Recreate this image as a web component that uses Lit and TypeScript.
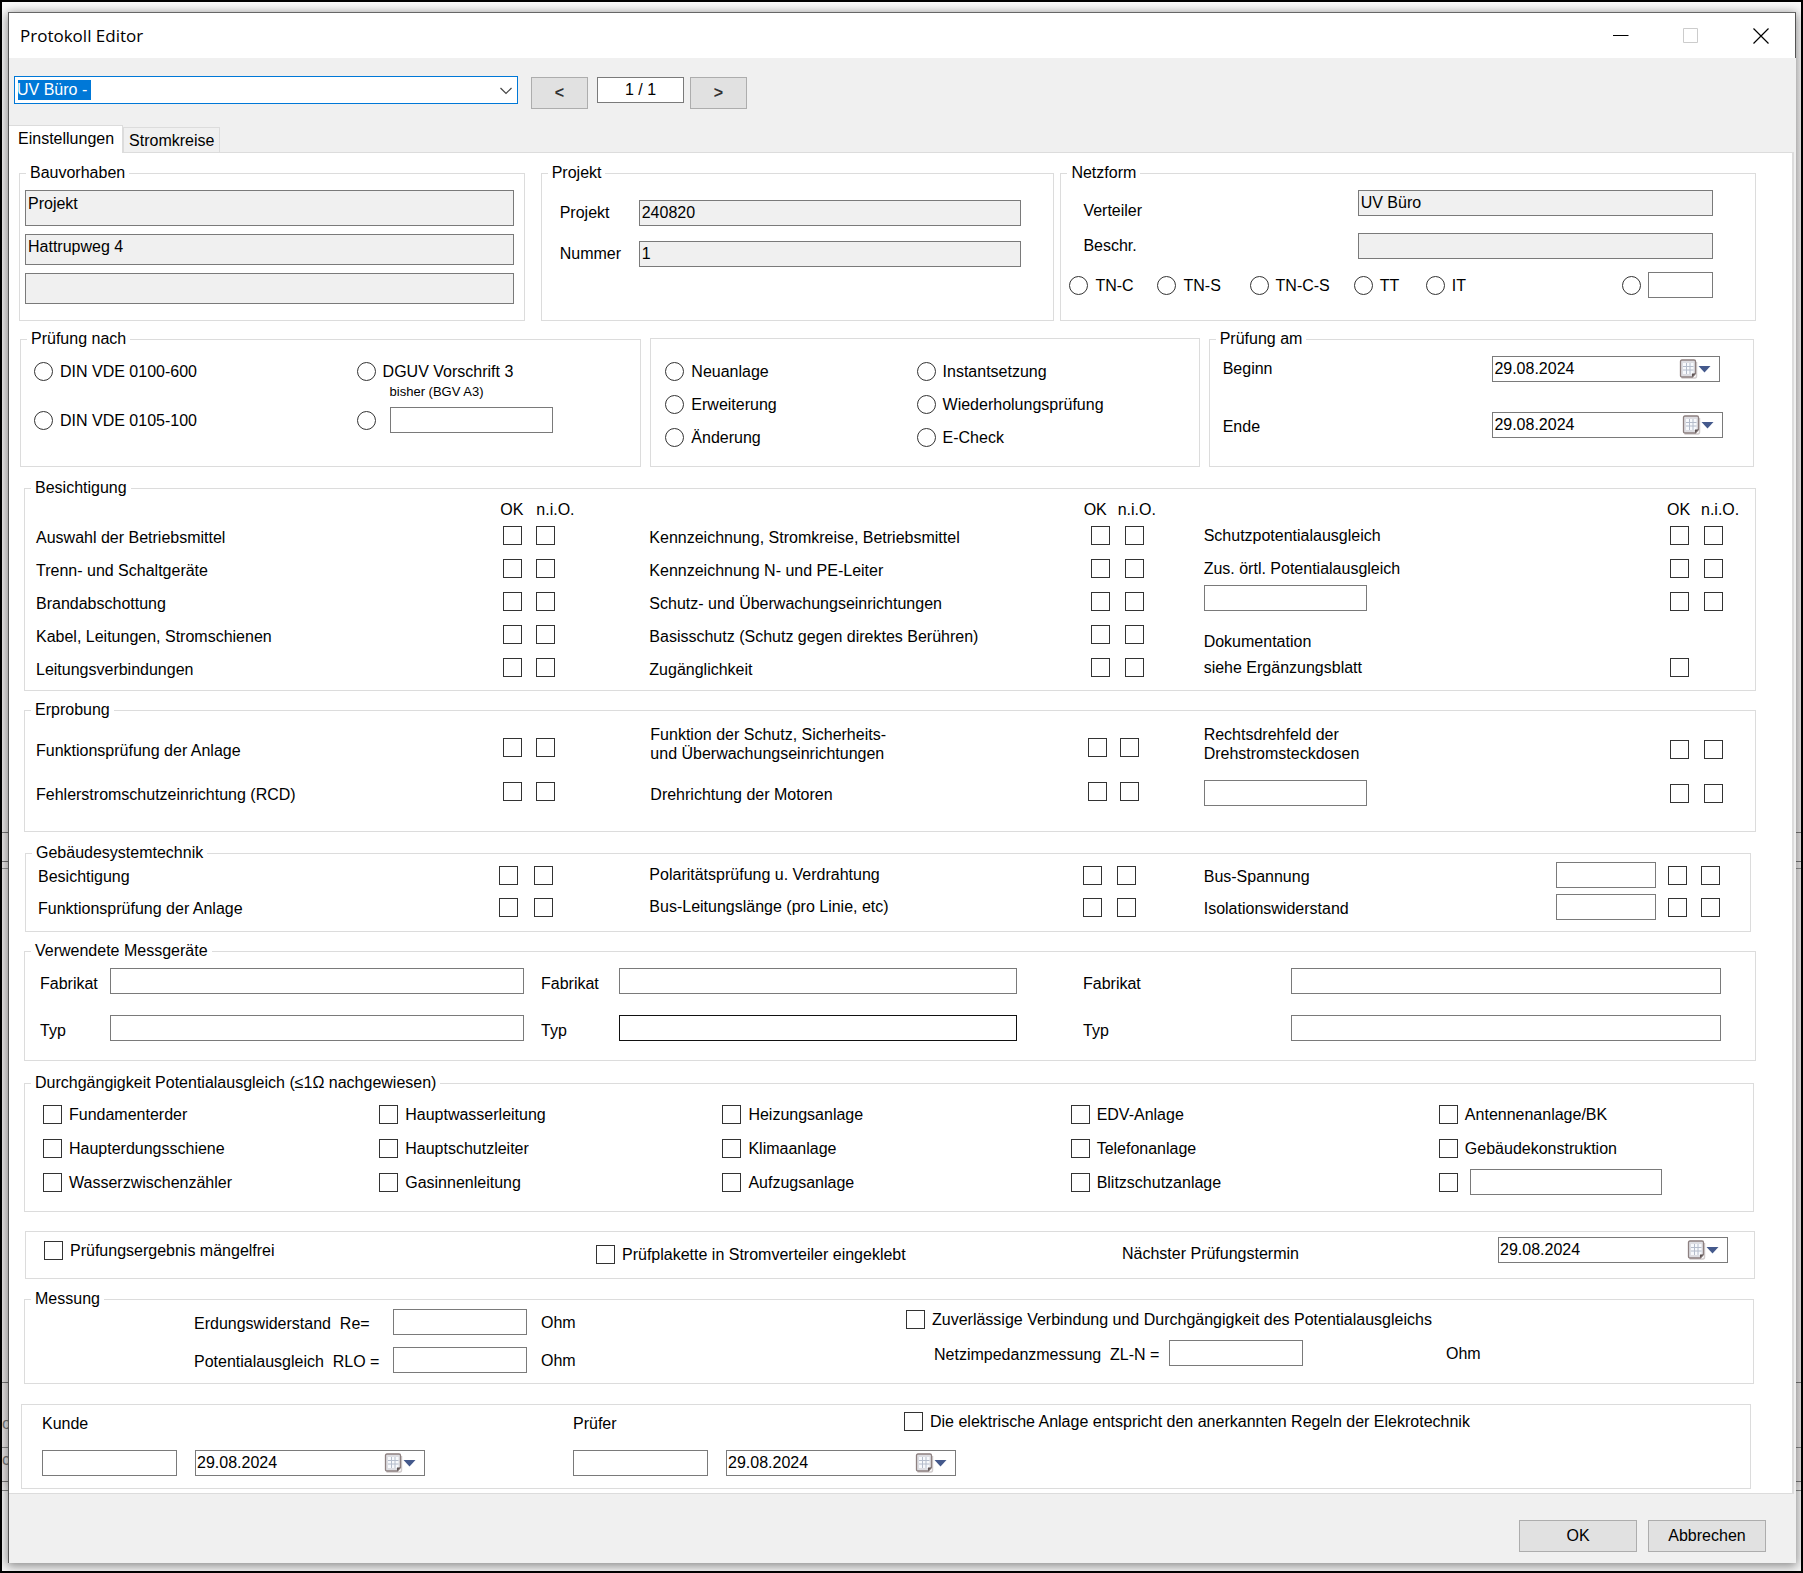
import { LitElement, html, css, nothing, TemplateResult } from "lit";
import { customElement, state } from "lit/decorators.js";

type Cell = TemplateResult | typeof nothing;

const BESICHTIGUNG_LEFT = [
  "Auswahl der Betriebsmittel",
  "Trenn- und Schaltgeräte",
  "Brandabschottung",
  "Kabel, Leitungen, Stromschienen",
  "Leitungsverbindungen",
];

const BESICHTIGUNG_MIDDLE = [
  "Kennzeichnung, Stromkreise, Betriebsmittel",
  "Kennzeichnung N- und PE-Leiter",
  "Schutz- und Überwachungseinrichtungen",
  "Basisschutz (Schutz gegen direktes Berühren)",
  "Zugänglichkeit",
];

const POTENTIAL_ROWS = [
  ["Fundamenterder", "Hauptwasserleitung", "Heizungsanlage", "EDV-Anlage", "Antennenanlage/BK"],
  ["Haupterdungsschiene", "Hauptschutzleiter", "Klimaanlage", "Telefonanlage", "Gebäudekonstruktion"],
  ["Wasserzwischenzähler", "Gasinnenleitung", "Aufzugsanlage", "Blitzschutzanlage"],
];

@customElement("app-root")
export class AppRoot extends LitElement {
  @state() private tab = "Einstellungen";

  static styles = css`
    :host {
      display: block;
      font-family: "Liberation Sans", Arial, sans-serif;
      font-size: 16px;
      line-height: 18px;
      color: #000;
    }
    * { box-sizing: border-box; }
    .desktop {
      position: relative;
      min-height: 100vh;
      border: 2px solid #000;
      padding: 10px 5px 8px 6px;
      overflow: hidden;
      background:
        linear-gradient(#777, #777) 0 830px / 100% 1px no-repeat,
        linear-gradient(#777, #777) 0 859px / 100% 1px no-repeat,
        linear-gradient(#999, #999) 0 866px / 100% 1px no-repeat,
        linear-gradient(#777, #777) 0 1380px / 100% 1px no-repeat,
        linear-gradient(#888, #888) 0 1445px / 100% 1px no-repeat,
        linear-gradient(#777, #777) 0 1479px / 100% 1px no-repeat,
        linear-gradient(#888, #888) 0 1488px / 100% 1px no-repeat,
        linear-gradient(#fafafa 0, #f0eeee 200px, #e9e6e6 1480px, #f6f6f6 1490px);
    }
    .behind {
      position: absolute;
      left: 0;
      top: 1413px;
      display: grid;
      gap: 18px;
      color: #777;
    }
    .window {
      position: relative;
      display: flex;
      flex-direction: column;
      background: #f0f0f0;
      border-left: 1px solid #555;
      border-top: 1px solid #666;
      box-shadow: 0 2px 10px 1px rgba(0, 0, 0, 0.45);
    }
    .titlebar {
      display: flex;
      align-items: center;
      justify-content: space-between;
      height: 45px;
      padding-left: 11px;
      padding-right: 18px;
      background: #fff;
      border-right: 1px solid #555;
    }
    h1 {
      margin: 0;
      font: 400 17px/24px "Open Sans", "Noto Sans", sans-serif;
    }
    .controls { display: flex; gap: 38px; }
    .controls button {
      display: grid;
      place-items: center;
      width: 32px;
      height: 32px;
      padding: 0;
      border: 0;
      background: none;
    }
    .toolbar {
      display: flex;
      align-items: flex-start;
      padding: 18px 5px 0;
    }
    .combo {
      position: relative;
      flex: 0 1 504px;
      display: flex;
      margin-right: 13px;
    }
    .combo select {
      appearance: none;
      width: 100%;
      height: 28px;
      padding: 0 24px 0 2px;
      border: 1px solid #0078d7;
      border-radius: 0;
      outline: 0;
      font: inherit;
      color: #fff;
      background: linear-gradient(#0078d7, #0078d7) 3px 3px / 73px 20px no-repeat #fff;
    }
    .combo svg { position: absolute; right: 6px; top: 11px; pointer-events: none; }
    button { font: inherit; color: #000; }
    .push {
      height: 32px;
      padding: 0;
      border: 1px solid #adadad;
      background: #e1e1e1;
    }
    .nav { flex: none; width: 57px; margin-top: 1px; font-weight: 700; color: #333; }
    .tabs { display: flex; align-items: flex-end; margin-top: 16px; }
    .tabs button {
      height: 25px;
      padding: 2px 5px 0;
      border: 1px solid #dcdcdc;
      border-bottom: 0;
      background: #f0f0f0;
    }
    .tabs button[aria-selected="true"] {
      height: 28px;
      padding: 0 8px 2px 9px;
      margin-bottom: -1px;
      background: #fff;
      border-left: 0;
      position: relative;
    }
    .panel {
      margin-right: 2px;
      padding: 11px 36px 4px 15px;
      border: solid #dcdcdc;
      border-width: 1px 2px 1px 0;
      background: #fff;
    }
    fieldset {
      min-width: 0;
      margin: 0;
      padding: 0;
      border: 1px solid #dcdcdc;
    }
    legend { margin-left: 6px; padding: 0 4px; height: 18px; }
    .plain { margin-top: 8px; }

    input[type="text"] {
      width: 100%;
      min-width: 0;
      height: 26px;
      padding: 0 2px;
      border: 1px solid #7a7a7a;
      border-radius: 0;
      outline: 0;
      font: inherit;
      color: #000;
      background: #fff;
    }
    input[type="text"][readonly] { background: #f0f0f0; }
    input[type="text"].page {
      flex: none;
      width: 87px;
      margin: 1px 6px 0 9px;
      background: #fff;
      text-align: center;
    }
    input[type="text"].active { border-color: #111; }
    input[type="checkbox"], input[type="radio"] {
      appearance: none;
      flex: none;
      display: block;
      width: 19px;
      height: 19px;
      margin: 0;
      border: 1px solid #333;
      background: #fff;
    }
    input[type="radio"] { border-radius: 50%; }
    input[type="checkbox"]:checked, input[type="radio"]:checked {
      background: radial-gradient(#222 0 4px, #fff 5px);
    }
    .opt {
      display: flex;
      align-items: center;
      gap: 7px;
      white-space: nowrap;
    }
    .opt span, .unit { padding-top: 1px; }
    .label { padding-top: 4px; white-space: nowrap; }
    .low { padding-top: 8px; white-space: nowrap; }

    .date {
      display: flex;
      height: 26px;
      border: 1px solid #7a7a7a;
      background: #fff;
    }
    .date input[type="text"] { height: 24px; padding: 0 1px; border: 0; }
    .date button {
      flex: none;
      width: 42px;
      padding: 0;
      border: 0;
      background: none;
    }
    .date svg { display: block; }

    .row-a {
      display: grid;
      grid-template-columns: 516fr 514fr 696fr;
      gap: 6px;
      margin-left: -5px;
    }
    .row-a > :first-child { margin-right: 10px; }
    .row-b {
      display: grid;
      grid-template-columns: 621fr 549fr 545fr;
      gap: 9px;
      margin: 9px 2px 0 -4px;
    }

    .site { display: grid; gap: 8px; padding: 8px 10px 16px 5px; }
    .site input[type="text"] { height: 31px; padding: 0 2px 5px; }
    .site input[type="text"]:first-child { height: 36px; padding-bottom: 8px; }
    .project {
      display: grid;
      grid-template-columns: 79px 1fr;
      align-items: center;
      row-gap: 15px;
      padding: 18px 32px 0 18px;
    }
    .net { display: grid; grid-template-columns: 274fr 355fr; padding: 8px 42px 0 22px; }
    .net-labels { display: grid; gap: 17px; padding-top: 12px; align-content: start; }
    .net-inputs { display: grid; gap: 17px; }
    .net-types {
      display: grid;
      grid-template-columns: 88fr 92fr 104fr 72fr 196fr 91fr;
      padding: 13px 42px 0 8px;
      height: 39px;
    }
    .norms {
      display: grid;
      grid-template-columns: 323fr 197fr;
      grid-template-rows: 19px 22px 26px;
      row-gap: 2px;
      align-items: center;
      padding: 14px 87px 33px 13px;
    }
    .note { align-self: start; padding-left: 33px; font-size: 13px; line-height: 17px; }
    .norms .opt:last-child { gap: 14px; }
    .kinds {
      display: grid;
      grid-template-columns: 252fr 283fr;
      row-gap: 14px;
      padding: 23px 0 0 14px;
    }
    .period {
      display: grid;
      grid-template-columns: 269fr 230fr;
      row-gap: 30px;
      align-items: center;
      padding: 8px 30px 0 13px;
    }
    .period .short { margin-right: 3px; }

    .matrix { display: grid; align-items: center; }
    .matrix .field { width: 163px; }
    .head { white-space: nowrap; }
    .head.ok { margin-left: -3px; }
    .head.near { margin-left: -7px; }
    .matrix .shift { margin-top: 4px; }
    .inspect { margin-top: 12px; }
    .inspect .matrix {
      grid-template-columns: 467fr 33px 113px 441fr 34px 79px 466fr 34px 40px;
      grid-template-rows: 19px repeat(5, 33px);
      padding: 3px 11px 6px;
    }
    .start { align-self: start; }
    .end { align-self: end; }
    .trial { margin-top: 10px; }
    .trial .matrix {
      grid-template-columns: 467fr 33px 114px 437fr 32px 84px 466fr 34px 40px;
      grid-template-rows: 44px 44px;
      padding: 6px 11px 18px;
    }
    .two { align-self: start; line-height: 19px; white-space: nowrap; }
    .bus { margin: 12px 5px 0 1px; }
    .bus .matrix {
      grid-template-columns: 461fr 35px 115px 433fr 34px 87px 352fr 112px 33px 38px;
      grid-template-rows: 26px 26px;
      row-gap: 6px;
      padding: 0 11px 11px 12px;
    }
    .bus .matrix .field { width: 100px; }
    .meters { margin-top: 10px; }
    .meters .body {
      display: grid;
      grid-template-columns: 70px 414fr 17px 78px 398fr 66px 208px 430fr;
      row-gap: 21px;
      align-items: center;
      padding: 8px 34px 19px 15px;
    }
    .meters .label { padding-top: 6px; }
    .meters .gap-cell { height: 1px; }
    .bond { margin: 13px 2px 0 0; }
    .bond .body {
      display: grid;
      grid-template-columns: 336fr 343fr 348fr 368fr 223fr;
      grid-auto-rows: 34px;
      align-items: center;
      padding: 5px 91px 12px 18px;
    }
    .bond .free { gap: 12px; }
    .result { margin: 19px 1px 0 1px; }
    .result .body {
      display: grid;
      grid-template-columns: 552fr 526fr 376fr 230fr;
      grid-template-rows: 26px;
      align-items: center;
      padding: 5px 26px 15px 18px;
    }
    .measure { margin: 11px 2px 0 0; }
    .measure .body { display: grid; grid-template-columns: 881fr 847fr; }
    .left {
      display: grid;
      grid-template-columns: 199px 134px auto;
      row-gap: 12px;
      align-items: center;
      padding: 1px 0 10px 169px;
    }
    .right { display: flex; flex-direction: column; gap: 11px; padding-top: 2px; }
    .impedance {
      display: grid;
      grid-template-columns: 235px 134px auto;
      align-items: center;
      padding-left: 28px;
    }
    .left .unit { padding-left: 14px; }
    .impedance .unit { padding-left: 143px; }
    .pre { white-space: pre; padding-top: 3px; }
    .sign { margin: 20px 5px 0 -3px; }
    .sign-top {
      display: grid;
      grid-template-columns: 531fr 331fr 846fr;
      height: 19px;
      margin: 4px 0 22px 20px;
    }
    .sign-bottom { display: grid; grid-template-columns: 531fr 1177fr; margin: 0 0 12px 20px; }
    .signature { display: grid; grid-template-columns: 135px 230px; gap: 18px; }
    .sign-top .label { padding-top: 6px; }

    .footer {
      display: flex;
      justify-content: flex-end;
      gap: 11px;
      padding: 26px 30px 11px;
    }
    .footer .push { width: 118px; }
  `;

  private box(name: string, cls = ""): TemplateResult {
    return html`<input class=${cls} type="checkbox" aria-label=${name} />`;
  }

  private pair(name: string, cls = ""): TemplateResult {
    return html`${this.box(`${name}: OK`, cls)}${this.box(`${name}: n.i.O.`, cls)}`;
  }

  private radio(group: string, text: string): TemplateResult {
    return html`<label class="opt"><input type="radio" name=${group} /><span>${text}</span></label>`;
  }

  private check(text: string): TemplateResult {
    return html`<label class="opt"><input type="checkbox" /><span>${text}</span></label>`;
  }

  private date(name: string, cls = ""): TemplateResult {
    return html`<div class="date ${cls}">
      <input type="text" .value=${"29.08.2024"} aria-label=${name} />
      <button type="button" aria-label="${name}: Kalender öffnen">
        <svg width="38" height="24" viewBox="0 0 38 24">
          <path d="M4.500 21h13.500q1.500 0 1.500-2v-14" fill="none" stroke="#d2cdcd" stroke-width="1.500" />
          <path d="M3.500 4.500q0-1.500 1.500-1.500h12q1.500 0 1.500 1.500v12l-3 3.500h-10.500q-1.500 0-1.500-1.500z" fill="#dddde2" stroke="#8d8080" stroke-width="1.300" />
          <path d="M6 6h10.500v11h-10.500z" fill="#f7f9fc" />
          <path d="M6 9.500h10.500M6 13h10.500M9.500 6v11M13 6v11" stroke="#b4bccb" fill="none" />
          <path d="M15 20v-3.500h3.500z" fill="#5f5555" />
          <path d="M21.500 9h12l-6 6.500z" fill="#44598c" />
        </svg>
      </button>
    </div>`;
  }

  private thirdColumn(row: number): Cell {
    switch (row) {
      case 0:
        return html`<span>Schutzpotentialausgleich</span>${this.pair("Schutzpotentialausgleich")}`;
      case 1:
        return html`<span>Zus. örtl. Potentialausgleich</span>${this.pair("Zus. örtl. Potentialausgleich")}`;
      case 2:
        return html`<input class="field start" type="text" aria-label="Weitere Besichtigung" />${this.pair("Weitere Besichtigung")}`;
      case 3:
        return html`<span class="end">Dokumentation</span><span></span><span></span>`;
      default:
        return html`<label for="doc">siehe Ergänzungsblatt</label><input id="doc" type="checkbox" /><span></span>`;
    }
  }

  private heads(ok = "ok", nio = ""): TemplateResult {
    return html`<span></span><span class="head ${ok}">OK</span><span class="head ${nio}">n.i.O.</span>`;
  }

  private inspection(): TemplateResult {
    return html`<fieldset class="inspect">
      <legend>Besichtigung</legend>
      <div class="matrix">
        ${this.heads()}${this.heads("near", "near")}${this.heads("ok", "ok")}
        ${BESICHTIGUNG_LEFT.map(
          (left, i) => html`
            <span class="label">${left}</span>${this.pair(left)}
            <span class="label">${BESICHTIGUNG_MIDDLE[i]}</span>${this.pair(BESICHTIGUNG_MIDDLE[i])}
            ${this.thirdColumn(i)}
          `
        )}
      </div>
    </fieldset>`;
  }

  private meterRow(kind: string): TemplateResult {
    const id = kind.toLowerCase();
    return html`
      <label class="label" for="${id}1">${kind}</label><input id="${id}1" type="text" />
      <span class="gap-cell"></span>
      <label class="label" for="${id}2">${kind}</label>
      <input id="${id}2" class=${kind === "Typ" ? "active" : ""} type="text" />
      <span class="gap-cell"></span>
      <label class="label" for="${id}3">${kind}</label><input id="${id}3" type="text" />
    `;
  }

  private settings(): TemplateResult {
    return html`
      <div class="row-a">
        <fieldset>
          <legend>Bauvorhaben</legend>
          <div class="site">
            <input type="text" readonly .value=${"Projekt"} aria-label="Bauvorhaben" />
            <input type="text" readonly .value=${"Hattrupweg 4"} aria-label="Straße" />
            <input type="text" readonly aria-label="Ort" />
          </div>
        </fieldset>
        <fieldset>
          <legend>Projekt</legend>
          <div class="project">
            <label for="project">Projekt</label><input id="project" type="text" readonly .value=${"240820"} />
            <label for="number">Nummer</label><input id="number" type="text" readonly .value=${"1"} />
          </div>
        </fieldset>
        <fieldset>
          <legend>Netzform</legend>
          <div class="net">
            <div class="net-labels">
              <label for="board">Verteiler</label>
              <label for="desc">Beschr.</label>
            </div>
            <div class="net-inputs">
              <input id="board" type="text" readonly .value=${"UV Büro"} />
              <input id="desc" type="text" readonly />
            </div>
          </div>
          <div class="net-types">
            ${["TN-C", "TN-S", "TN-C-S", "TT", "IT"].map((t) => this.radio("net", t))}
            <div class="opt">
              <input type="radio" name="net" aria-label="Andere Netzform" />
              <input type="text" aria-label="Andere Netzform, Bezeichnung" />
            </div>
          </div>
        </fieldset>
      </div>

      <div class="row-b">
        <fieldset>
          <legend>Prüfung nach</legend>
          <div class="norms">
            ${this.radio("norm", "DIN VDE 0100-600")}${this.radio("norm", "DGUV Vorschrift 3")}
            <span></span><span class="note">bisher (BGV A3)</span>
            ${this.radio("norm", "DIN VDE 0105-100")}
            <div class="opt">
              <input type="radio" name="norm" aria-label="Andere Norm" />
              <input type="text" aria-label="Andere Norm, Bezeichnung" />
            </div>
          </div>
        </fieldset>
        <fieldset class="plain" aria-label="Art der Prüfung">
          <div class="kinds">
            ${["Neuanlage", "Instantsetzung", "Erweiterung", "Wiederholungsprüfung", "Änderung", "E-Check"].map((t) =>
              this.radio("kind", t)
            )}
          </div>
        </fieldset>
        <fieldset>
          <legend>Prüfung am</legend>
          <div class="period">
            <span>Beginn</span>${this.date("Beginn", "short")}
            <span class="label">Ende</span>${this.date("Ende")}
          </div>
        </fieldset>
      </div>

      ${this.inspection()}

      <fieldset class="trial">
        <legend>Erprobung</legend>
        <div class="matrix">
          <span class="low">Funktionsprüfung der Anlage</span>${this.pair("Funktionsprüfung der Anlage")}
          <span class="two">Funktion der Schutz, Sicherheits-<br />und Überwachungseinrichtungen</span>
          ${this.pair("Funktion der Schutz-, Sicherheits- und Überwachungseinrichtungen")}
          <span class="two">Rechtsdrehfeld der<br />Drehstromsteckdosen</span>
          ${this.pair("Rechtsdrehfeld der Drehstromsteckdosen", "shift")}
          <span class="low">Fehlerstromschutzeinrichtung (RCD)</span>${this.pair("Fehlerstromschutzeinrichtung (RCD)")}
          <span class="low">Drehrichtung der Motoren</span>${this.pair("Drehrichtung der Motoren")}
          <input class="field shift" type="text" aria-label="Weitere Erprobung" />${this.pair("Weitere Erprobung", "shift")}
        </div>
      </fieldset>

      <fieldset class="bus">
        <legend>Gebäudesystemtechnik</legend>
        <div class="matrix">
          <span class="label">Besichtigung</span>${this.pair("Besichtigung")}
          <span>Polaritätsprüfung u. Verdrahtung</span>${this.pair("Polaritätsprüfung u. Verdrahtung")}
          <label class="label" for="busv">Bus-Spannung</label>
          <input id="busv" class="field" type="text" />${this.pair("Bus-Spannung")}
          <span class="label">Funktionsprüfung der Anlage</span>${this.pair("Funktionsprüfung der Anlage")}
          <span>Bus-Leitungslänge (pro Linie, etc)</span>${this.pair("Bus-Leitungslänge")}
          <label class="label" for="iso">Isolationswiderstand</label>
          <input id="iso" class="field" type="text" />${this.pair("Isolationswiderstand")}
        </div>
      </fieldset>

      <fieldset class="meters">
        <legend>Verwendete Messgeräte</legend>
        <div class="body">${this.meterRow("Fabrikat")}${this.meterRow("Typ")}</div>
      </fieldset>

      <fieldset class="bond">
        <legend>Durchgängigkeit Potentialausgleich (≤1Ω nachgewiesen)</legend>
        <div class="body">
          ${POTENTIAL_ROWS.map((row) => row.map((t) => this.check(t)))}
          <div class="opt free">
            ${this.box("Weitere Anlage")}
            <input type="text" aria-label="Weitere Anlage, Bezeichnung" />
          </div>
        </div>
      </fieldset>

      <fieldset class="result" aria-label="Prüfungsergebnis">
        <div class="body">
          ${this.check("Prüfungsergebnis mängelfrei")}
          <div class="low">${this.check("Prüfplakette in Stromverteiler eingeklebt")}</div>
          <span class="low">Nächster Prüfungstermin</span>
          ${this.date("Nächster Prüfungstermin")}
        </div>
      </fieldset>

      <fieldset class="measure">
        <legend>Messung</legend>
        <div class="body">
          <div class="left">
            <label class="pre" for="re">Erdungswiderstand  Re=</label><input id="re" type="text" /><span class="unit">Ohm</span>
            <label class="pre" for="rlo">Potentialausgleich  RLO =</label><input id="rlo" type="text" /><span class="unit">Ohm</span>
          </div>
          <div class="right">
            ${this.check("Zuverlässige Verbindung und Durchgängigkeit des Potentialausgleichs")}
            <div class="impedance">
              <label class="pre" for="zln">Netzimpedanzmessung  ZL-N =</label><input id="zln" type="text" /><span class="unit">Ohm</span>
            </div>
          </div>
        </div>
      </fieldset>

      <fieldset class="sign" aria-label="Unterschriften">
        <div class="sign-top">
          <label class="label" for="customer">Kunde</label>
          <label class="label" for="inspector">Prüfer</label>
          ${this.check("Die elektrische Anlage entspricht den anerkannten Regeln der Elekrotechnik")}
        </div>
        <div class="sign-bottom">
          <div class="signature"><input id="customer" type="text" />${this.date("Datum Kunde")}</div>
          <div class="signature"><input id="inspector" type="text" />${this.date("Datum Prüfer")}</div>
        </div>
      </fieldset>
    `;
  }

  render() {
    return html`
      <div class="desktop">
        <div class="behind" aria-hidden="true"><span>o</span><span>c</span></div>
        <div class="window">
          <header class="titlebar">
            <h1>Protokoll Editor</h1>
            <div class="controls">
              <button type="button" aria-label="Minimieren">
                <svg width="16" height="16" viewBox="0 0 16 16"><path d="M0 7.500h15.500" stroke="#000" /></svg>
              </button>
              <button type="button" aria-label="Maximieren" disabled>
                <svg width="16" height="16" viewBox="0 0 16 16"><path d="M.5 .5h14v14h-14z" fill="none" stroke="#ccc" /></svg>
              </button>
              <button type="button" aria-label="Schließen">
                <svg width="16" height="16" viewBox="0 0 16 16"><path d="M.5 .5l15 15M15.500 .5l-15 15" stroke="#000" stroke-width="1.200" /></svg>
              </button>
            </div>
          </header>
          <div class="toolbar">
            <div class="combo">
              <select aria-label="Verteiler auswählen"><option>UV Büro -</option></select>
              <svg width="12" height="8" viewBox="0 0 12 8"><path d="M.5 1l5.500 5.500L11.500 1" fill="none" stroke="#444" stroke-width="1.200" /></svg>
            </div>
            <button class="push nav" type="button" aria-label="Zurück">&lt;</button>
            <input class="page" type="text" readonly .value=${"1 / 1"} aria-label="Seite" />
            <button class="push nav" type="button" aria-label="Weiter">&gt;</button>
          </div>
          <div class="tabs" role="tablist">
            ${["Einstellungen", "Stromkreise"].map(
              (t) => html`<button
                type="button"
                role="tab"
                aria-selected=${this.tab === t ? "true" : "false"}
                @click=${() => (this.tab = t)}
              >${t}</button>`
            )}
          </div>
          <main class="panel" role="tabpanel">${this.settings()}</main>
          <footer class="footer">
            <button class="push" type="button">OK</button>
            <button class="push" type="button">Abbrechen</button>
          </footer>
        </div>
      </div>
    `;
  }
}
